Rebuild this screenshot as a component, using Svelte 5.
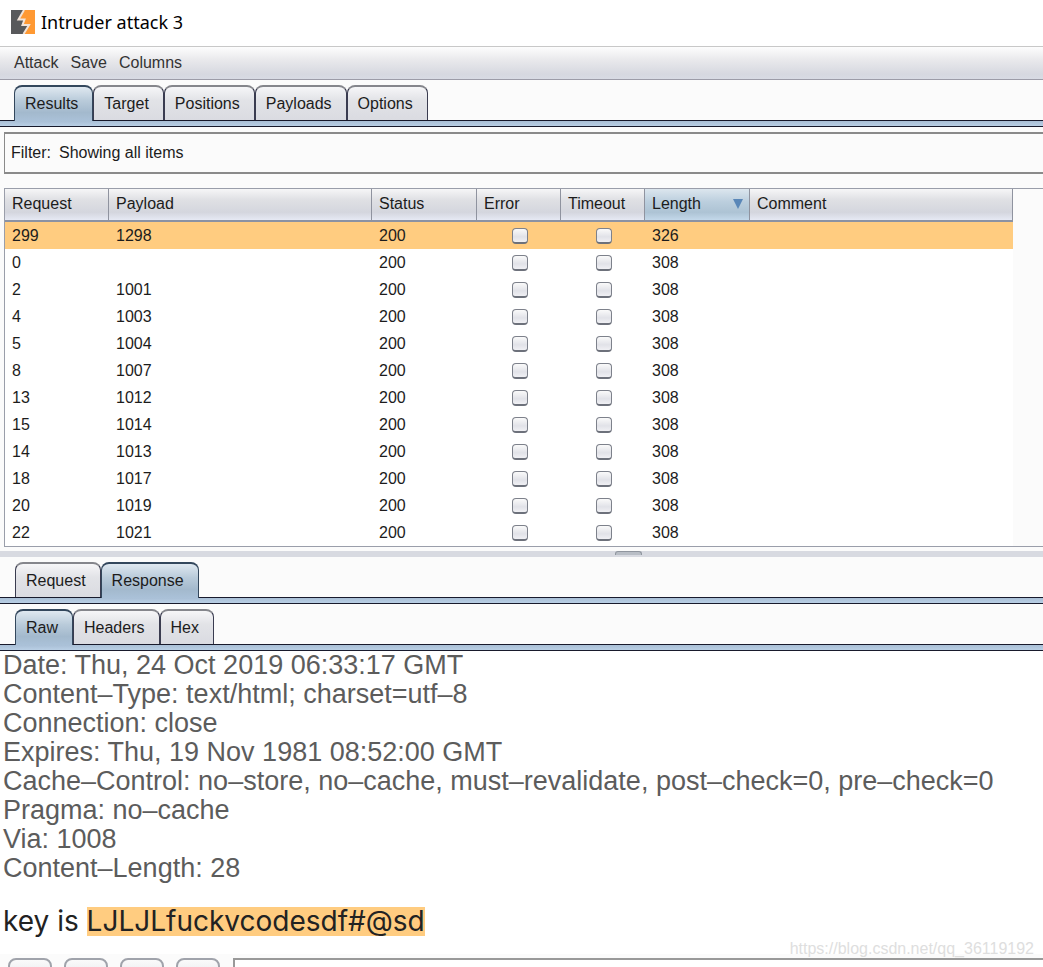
<script>
  const menus = ['Attack', 'Save', 'Columns'];
  const mainTabs = ['Results', 'Target', 'Positions', 'Payloads', 'Options'];
  const messageTabs = ['Request', 'Response'];
  const viewTabs = ['Raw', 'Headers', 'Hex'];

  let mainTab = $state('Results');
  let messageTab = $state('Response');
  let viewTab = $state('Raw');

  const rows = [
    [299, '1298', 200, 326],
    [0, '', 200, 308],
    [2, '1001', 200, 308],
    [4, '1003', 200, 308],
    [5, '1004', 200, 308],
    [8, '1007', 200, 308],
    [13, '1012', 200, 308],
    [15, '1014', 200, 308],
    [14, '1013', 200, 308],
    [18, '1017', 200, 308],
    [20, '1019', 200, 308],
    [22, '1021', 200, 308]
  ];

  const headers = [
    'Date: Thu, 24 Oct 2019 06:33:17 GMT',
    'Content–Type: text/html; charset=utf–8',
    'Connection: close',
    'Expires: Thu, 19 Nov 1981 08:52:00 GMT',
    'Cache–Control: no–store, no–cache, must–revalidate, post–check=0, pre–check=0',
    'Pragma: no–cache',
    'Via: 1008',
    'Content–Length: 28'
  ];
</script>

{#snippet tabs(items, current, pick, label)}
  <div class="tabs" role="tablist" aria-label={label}>
    {#each items as item}
      <button class="tab" class:active={item === current} role="tab" aria-selected={item === current} onclick={() => pick(item)}>{item}</button>
    {/each}
  </div>
  <div class="band"></div>
{/snippet}

<div class="window">
  <header class="title">
    <svg width="24" height="24" viewBox="0 0 24 24" aria-hidden="true">
      <rect width="24" height="24" fill="#58595b" />
      <path d="M13 0H24V24H12.500L18 14.500H12L13.500 10H8Z" fill="#ff9933" />
      <path d="M13 0L7.500 9.500H13.500L11.500 15H18L12.500 24" fill="none" stroke="#f1e3d8" stroke-width="2" />
    </svg>
    <h1>Intruder attack 3</h1>
  </header>

  <nav class="menubar">
    {#each menus as menu}<button>{menu}</button>{/each}
  </nav>

  {@render tabs(mainTabs, mainTab, (t) => (mainTab = t), 'Attack')}

  <button class="filter"><span>Filter:</span><span>Showing all items</span></button>

  <div class="results">
    <table>
      <colgroup>
        <col class="c-request" /><col class="c-payload" /><col class="c-status" /><col class="c-flag" /><col class="c-flag" /><col class="c-length" /><col />
      </colgroup>
      <thead>
        <tr>
          <th>Request</th>
          <th>Payload</th>
          <th>Status</th>
          <th>Error</th>
          <th>Timeout</th>
          <th class="sorted" aria-sort="descending">
            <div>Length<svg width="10" height="10" viewBox="0 0 10 10" aria-hidden="true"><path d="M0 0H10L5 10Z" fill="#5a87b8" /></svg></div>
          </th>
          <th>Comment</th>
        </tr>
      </thead>
      <tbody>
        {#each rows as [request, payload, status, length], i}
          <tr class:selected={i === 0}>
            <td>{request}</td>
            <td>{payload}</td>
            <td>{status}</td>
            <td class="flag"><input type="checkbox" aria-label="Error" /></td>
            <td class="flag"><input type="checkbox" aria-label="Timeout" /></td>
            <td>{length}</td>
            <td></td>
          </tr>
        {/each}
      </tbody>
    </table>
  </div>

  <div class="splitter"><span></span></div>

  <section class="lower">
    {@render tabs(messageTabs, messageTab, (t) => (messageTab = t), 'Message')}
    {@render tabs(viewTabs, viewTab, (t) => (viewTab = t), 'View')}

    <div class="message">
      <div class="head">
        {#each headers as line}<div>{line}</div>{/each}
      </div>
      <p>key is <mark>LJLJLfuckvcodesdf#@sd</mark></p>
      <span class="watermark">https://blog.csdn.net/qq_36119192</span>
    </div>

    <footer>
      <button aria-label="Help"></button>
      <button aria-label="Options"></button>
      <button aria-label="Previous match"></button>
      <button aria-label="Next match"></button>
      <input type="text" aria-label="Search" />
    </footer>
  </section>
</div>

<style>
  :global(body) {
    margin: 0;
    overflow: hidden;
  }
  .window {
    height: 100vh;
    overflow: hidden;
    background: #fbfbfb;
    color: #1c1c1c;
    font: 16px/20px "Liberation Sans", Arial, sans-serif;
  }
  button {
    font: inherit;
    color: inherit;
    cursor: pointer;
  }
  .title {
    display: flex;
    align-items: center;
    gap: 6px;
    height: 46px;
    padding: 0 11px;
    box-sizing: border-box;
    background: #fff;
    border-bottom: 2px solid #fff;
  }
  h1 {
    margin: 0;
    color: #000;
    font: 400 18px/24px "Noto Sans", "Open Sans", sans-serif;
  }
  .menubar {
    display: flex;
    align-items: center;
    gap: 12px;
    height: 32px;
    padding: 0 14px;
    color: #333;
    border-top: 1px solid #c8c8c8;
    border-bottom: 1px solid #9c9ca8;
    background: linear-gradient(#fdfdfd, #e9e9ec 40%, #d6d8e0 85%, #d8dbe4);
  }
  .menubar button {
    padding: 0;
    border: 0;
    background: none;
  }
  .tabs {
    display: flex;
    height: 35px;
    padding: 5px 14px 0;
  }
  .lower .tabs {
    padding-left: 15px;
  }
  .tab {
    height: 35px;
    padding: 0 14px 0 10px;
    border: 1px solid #3a3c50;
    border-top: 2px solid #85868c;
    border-bottom: 0;
    border-radius: 8px 8px 0 0;
    background: linear-gradient(#f6f6f8, #e2e3e7 40%, #dadbe1);
  }
  .tab.active {
    position: relative;
    height: 36px;
    border-color: #33475c;
    background: linear-gradient(#dfe8f0, #b9cbda 40%, #a3b9cd 75%, #aac1d8);
  }
  .band {
    height: 5px;
    border-top: 1px solid #181a2c;
    border-bottom: 1px solid #181a2c;
    background: linear-gradient(#a9bfd6, #b9cfe5);
  }
  .filter {
    display: flex;
    align-items: center;
    gap: 8px;
    width: calc(100% - 2px);
    height: 42px;
    margin: 5px 0 14px 4px;
    padding: 0 6px;
    border: 2px solid #8a8a8a;
    border-width: 2px 1px;
    background: #fbfbfb;
  }
  .results {
    margin-left: 4px;
    padding-right: 30px;
    border: 1px solid #9a9eaa;
    border-right: 0;
  }
  table {
    width: 100%;
    table-layout: fixed;
    border-collapse: separate;
    border-spacing: 0;
    background: #fff;
  }
  .c-request { width: 104px; }
  .c-payload { width: 263px; }
  .c-status, .c-length { width: 105px; }
  .c-flag { width: 84px; }
  th {
    height: 29px;
    padding: 0 7px 2px;
    text-align: left;
    font-weight: 400;
    border-right: 1px solid #8f939f;
    border-bottom: 2px solid #8b92a3;
    background: linear-gradient(#f6f6f7, #dfe0e4 35%, #d4d6de 75%, #e6e9f4);
  }
  th.sorted {
    padding-right: 6px;
    background: linear-gradient(#dce6ee, #bccfde 40%, #adc3d4 75%, #c3d8ea);
  }
  th.sorted div {
    display: flex;
    align-items: center;
    justify-content: space-between;
  }
  td {
    height: 27px;
    padding: 0 7px;
  }
  td.flag {
    padding: 0 6px 0 8px;
  }
  .selected td {
    background: #ffcc80;
  }
  .flag input {
    appearance: none;
    display: block;
    box-sizing: border-box;
    width: 16px;
    height: 16px;
    margin: 0 auto;
    border: 1px solid #7d818b;
    border-bottom: 2px solid #6d717b;
    border-radius: 4px;
    background: linear-gradient(#fafafa, #e1e2e8 60%, #f0f0f4);
  }
  .splitter {
    display: flex;
    justify-content: center;
    height: 6px;
    margin-top: 4px;
    padding-left: 214px;
    background: #d8dae1;
  }
  .splitter span {
    width: 25px;
    height: 3px;
    border: 1px solid #90969f;
    border-bottom: 0;
    border-radius: 3px 3px 0 0;
    background: #b9bec6;
  }
  .message {
    position: relative;
    height: 303px;
    padding: 0 3px;
    box-sizing: border-box;
    background: #fff;
    color: #5c5c5c;
    font-size: 27px;
    line-height: 29px;
  }
  .head {
    white-space: nowrap;
  }
  .message p {
    margin: 24px 0 0;
    color: #222;
    font-family: Inter, "Liberation Sans", sans-serif;
    font-size: 28px;
  }
  mark {
    display: inline-block;
    background: #ffcc80;
    color: #222;
  }
  .watermark {
    position: absolute;
    right: 9px;
    bottom: -5px;
    color: #dedede;
    font-size: 16px;
    line-height: 20px;
  }
  footer {
    display: flex;
    gap: 12px;
    padding: 4px 0 4px 8px;
  }
  footer button {
    width: 44px;
    height: 32px;
    border: 2px solid #a0a3ab;
    border-radius: 8px;
    background: linear-gradient(#fafafa, #dddfe5);
  }
  footer input {
    flex: 1;
    min-width: 0;
    height: 32px;
    margin-left: 1px;
    box-sizing: border-box;
    border: 2px solid #999;
    border-right: 0;
    background: #fff;
  }
</style>
